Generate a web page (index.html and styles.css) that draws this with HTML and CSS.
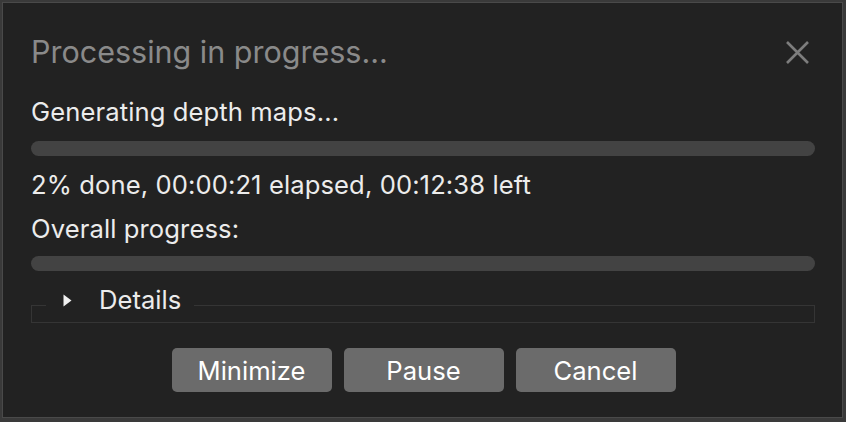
FILE: index.html
```html
<!DOCTYPE html>
<html>
<head>
<meta charset="utf-8">
<link rel="stylesheet" href="styles.css">
</head>
<body>
<div class="dialog">
  <div class="title-row">
    <div class="title">Processing in progress...</div>
    <svg class="close" width="25" height="25" viewBox="0 0 25 25"><path d="M2 2 L23 23 M23 2 L2 23" stroke="#7d7d7d" stroke-width="2.6" fill="none"/></svg>
  </div>
  <div class="label first">Generating depth maps...</div>
  <div class="bar bar1"></div>
  <div class="label status">2% done, 00:00:21 elapsed, 00:12:38 left</div>
  <div class="label overall">Overall progress:</div>
  <div class="bar bar2"></div>
  <fieldset class="details">
    <legend><svg class="tri" width="9" height="13" viewBox="0 0 9 13"><path d="M0.5 0.5 L8.5 6.5 L0.5 12.5 Z" fill="#f0f0f0"/></svg><span>Details</span></legend>
  </fieldset>
  <div class="buttons">
    <button class="btn">Minimize</button>
    <button class="btn">Pause</button>
    <button class="btn">Cancel</button>
  </div>
</div>
</body>
</html>
```
FILE: styles.css
```css
html, body {
  margin: 0;
  padding: 0;
}
body {
  width: 846px;
  height: 422px;
  background: #3a3a3a;
  font-family: Inter, "Noto Sans", sans-serif;
  overflow: hidden;
}
.dialog {
  margin: 2px 0 0 2px;
  border: 1px solid #4a4a4a;
  background: #222222;
  padding: 31px 27px 0 28px;
  box-sizing: border-box;
  height: 416px;
  width: 841px;
}
.title-row {
  display: flex;
  justify-content: space-between;
  align-items: center;
  height: 36px;
}
.title {
  font-size: 30.5px;
  line-height: 36px;
  color: #8a8a8a;
}
.close {
  margin-right: 5px;
  display: block;
}
.label {
  font-size: 25.6px;
  line-height: 30px;
  color: #ececec;
  letter-spacing: 0.1px;
}
.first { margin-top: 27px; }
.bar {
  height: 15px;
  border-radius: 8px;
  background: #434343;
}
.bar1 { margin-top: 14px; }
.status { margin-top: 14px; }
.overall { margin-top: 14px; }
.bar2 { margin-top: 12px; }
.details {
  margin: 17px 0 0 0;
  padding: 0;
  border: 1px solid #353535;
  min-width: 0;
}
.details legend {
  margin-left: 14px;
  padding: 0 13px 10px 17px;
  display: flex;
  align-items: center;
  font-size: 25.6px;
  line-height: 24px;
  color: #ececec;
}
.tri {
  display: block;
  margin-right: 27px;
}
.buttons {
  display: flex;
  justify-content: center;
  gap: 12px;
  margin-top: 25px;
  padding-left: 1px;
}
.btn {
  width: 160px;
  height: 44px;
  border: none;
  border-radius: 5px;
  background: #6b6b6b;
  color: #ffffff;
  font-family: Inter, "Noto Sans", sans-serif;
  font-size: 25.6px;
  padding: 0;
}
```
